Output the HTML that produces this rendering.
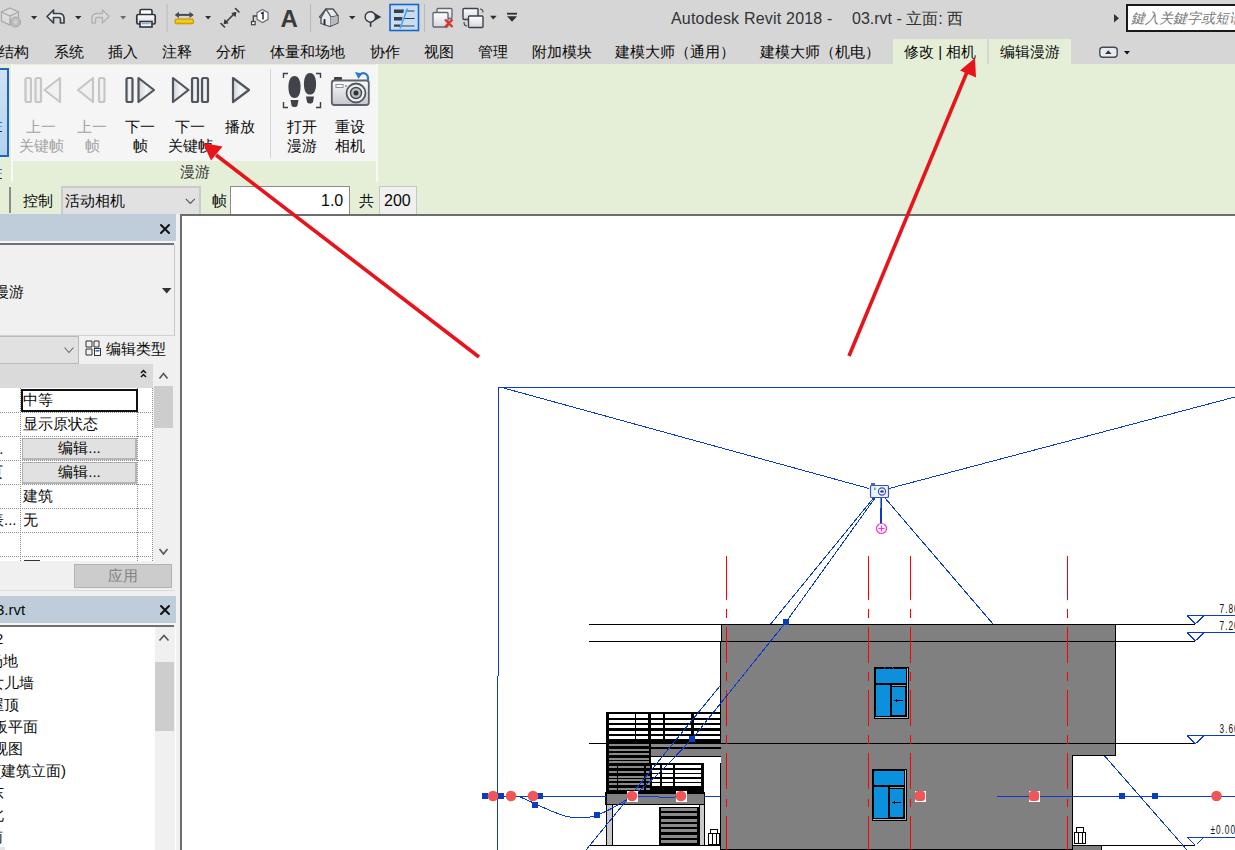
<!DOCTYPE html>
<html><head><meta charset="utf-8">
<style>
*{box-sizing:border-box}
html,body{margin:0;padding:0}
body{width:1235px;height:850px;overflow:hidden;position:relative;background:#d6d6d6;font-family:"Liberation Sans",sans-serif;color:#0a0a0a}
.a{position:absolute}
.t{position:absolute;white-space:nowrap;font-size:15px;line-height:18px}
svg{position:absolute;overflow:visible}
</style></head><body>

<!-- ===== title bar ===== -->
<svg width="1235" height="64" style="left:0;top:0" viewBox="0 0 1235 64">
 <defs>
  <linearGradient id="gw" x1="0" y1="0" x2="0" y2="1"><stop offset="0" stop-color="#ffffff"/><stop offset="1" stop-color="#d5d8dd"/></linearGradient>
 </defs>
 <!-- app icon -->
 <g stroke="#a8a8a8" stroke-width="1.2" fill="#dcdcdc">
  <path d="M10 8 L18.5 12 V21 L10 25 L1.5 21 V12 Z"/>
  <path d="M1.5 12 L10 16 L18.5 12 M10 16 V25" fill="none"/>
 </g>
 <circle cx="15.5" cy="22" r="5" fill="#bdbdbd" stroke="#a5a5a5" stroke-width="1"/>
 <circle cx="15.5" cy="22" r="2" fill="#d0d0d0"/>
 <g fill="#2e2e2e">
  <path d="M31 16 H37.2 L34.1 19.5 Z"/><path d="M75 16 H81.5 L78.2 19.5 Z"/>
  <path d="M205.2 16 H211.1 L208.1 19.5 Z"/><path d="M349 16 H355.5 L352.2 19.5 Z"/>
  <path d="M490 15.8 H496.7 L493.3 19.6 Z"/>
  <path d="M507 16.2 H517 L512 21.8 Z"/><rect x="507" y="12.8" width="10" height="1.8"/>
 </g>
 <path d="M120.2 16 H126.1 L123.1 19.5 Z" fill="#6a6a6a"/>
 <!-- undo -->
 <path d="M47 16.5 L53.5 10 V13.5 H59 C62.5 13.5 64 15.5 64 18.5 V23 H60.5 V19 C60.5 18 60 17.5 59 17.5 H53.5 V23 Z" fill="#e7eaef" stroke="#3c4148" stroke-width="1.7" stroke-linejoin="round"/>
 <!-- redo -->
 <path d="M109 16.5 L102.5 10 V13.5 H97 C93.5 13.5 92 15.5 92 18.5 V23 H95.5 V19 C95.5 18 96 17.5 97 17.5 H102.5 V23 Z" fill="#dadada" stroke="#b2b2b2" stroke-width="1.4" stroke-linejoin="round"/>
 <!-- printer -->
 <rect x="140" y="9.5" width="12" height="7" rx="1.5" fill="#fff" stroke="#2f353d" stroke-width="1.6"/>
 <rect x="136.8" y="14.5" width="18.4" height="9.5" rx="1.5" fill="url(#gw)" stroke="#2f353d" stroke-width="1.7"/>
 <rect x="140" y="21.5" width="12" height="5.5" fill="#eef2f6" stroke="#2f353d" stroke-width="1.6"/>
 <rect x="141.5" y="23" width="9" height="1.2" fill="#8fb0cc"/>
 <!-- separators -->
 <g fill="#b9b9b9"><rect x="166.5" y="4" width="1" height="28"/><rect x="310" y="4" width="1" height="28"/><rect x="424" y="4" width="1" height="28"/></g>
 <!-- measure -->
 <path d="M176 14.9 H192.5" stroke="#444b55" stroke-width="2"/>
 <path d="M174.7 14.9 L179 11.8 V18 Z M193.8 14.9 L189.5 11.8 V18 Z" fill="#444b55"/>
 <rect x="175" y="19" width="18.5" height="4.8" rx="1.5" fill="#f0c000" stroke="#c88a00" stroke-width="1"/>
 <path d="M177 20.5 V21.5 M179 20.5 V21.5 M181 20.5 V21.5 M183 20.5 V21.5 M185 20.5 V21.5 M187 20.5 V21.5 M189 20.5 V21.5 M191 20.5 V21.5" stroke="#fff7b0" stroke-width="0.8"/>
 <!-- aligned dim -->
 <g stroke="#353b43" stroke-linecap="round">
  <path d="M221 23.5 L224.5 27" stroke-width="1.6"/><path d="M235.5 8.5 L239 12" stroke-width="1.6"/>
  <path d="M225 23 L235 13" stroke-width="1.5"/>
 </g>
 <path d="M223.6 24.2 L224.5 19 L228.8 23.3 Z M236.4 12 L235.5 17.2 L231.2 12.9 Z" fill="#353b43"/>
 <!-- tag -->
 <path d="M262.5 9.5 L268 12.7 V19.3 L262.5 22.5 L257 19.3 V12.7 Z" fill="#fff" stroke="#6a6f77" stroke-width="1.2"/>
 <path d="M257 16 H253.3 V21.5" fill="none" stroke="#3c424a" stroke-width="1.3"/>
 <rect x="251.5" y="21.5" width="3.6" height="3.2" fill="#fff" stroke="#3c424a" stroke-width="1.2"/>
 <path d="M261 13.5 L263 12.5 V19.5" fill="none" stroke="#2a2e34" stroke-width="1.5"/>
 <text x="280.6" y="26.7" font-family="Liberation Sans" font-weight="bold" font-size="24" fill="#3a3a3a">A</text>
 <!-- house -->
 <path d="M319.5 17 L326 9 H333 L338 15.5 V23 L330 26.5 L321 23.5 V18 Z" fill="#e8eaee" stroke="#4a4f57" stroke-width="1.3" stroke-linejoin="round"/>
 <path d="M321 18 L326 9 L331 17 V26 M331 17 L338 15.5" fill="none" stroke="#4a4f57" stroke-width="1.2"/>
 <path d="M331 17.5 L337.5 16 V22.8 L331 25.5 Z" fill="#b6bcc4"/>
 <path d="M323.5 25 V20 C323.5 18.5 325.5 18.5 325.5 20 V25.5 Z" fill="#2d3137"/>
 <!-- pin -->
 <path d="M371 11 L381.3 16.9 L371 22.8 Z" fill="#30353c"/>
 <rect x="369.8" y="21" width="1.6" height="5.8" fill="#30353c"/>
 <circle cx="370.3" cy="16.9" r="5.2" fill="#e4e7ec" stroke="#353a41" stroke-width="1.4"/>
 <!-- thin lines button -->
 <rect x="390" y="4.5" width="28.5" height="26" fill="#c6ddf3" stroke="#1766c9" stroke-width="1.6"/>
 <g fill="#3a3f46"><path d="M394 9.5 H404 L403.3 13 H394 Z"/><path d="M394 17 H402.5 L401.8 20.5 H394 Z"/><path d="M394 24.5 H400.5 L400 26.8 H394 Z"/></g>
 <g stroke="#3a3f46" stroke-width="1.2"><path d="M405.5 11 H414.5 M403 18.5 H414.5 M400.5 26 H414.5"/></g>
 <path d="M407.5 8.5 L400 28.5" stroke="#3aa0ff" stroke-width="1.4"/>
 <!-- close hidden -->
 <rect x="437" y="8.5" width="15" height="10" rx="1" fill="url(#gw)" stroke="#606670" stroke-width="1.3"/>
 <rect x="433" y="12.5" width="15" height="14.5" rx="1" fill="url(#gw)" stroke="#606670" stroke-width="1.3"/>
 <path d="M445 19.5 L452.5 27 M452.5 19.5 L445 27" stroke="#e03030" stroke-width="2.4"/>
 <!-- switch windows -->
 <rect x="463" y="8.5" width="15" height="11" rx="1" fill="url(#gw)" stroke="#3c424a" stroke-width="1.4"/>
 <rect x="468.5" y="16" width="14.5" height="11.5" rx="1" fill="url(#gw)" stroke="#3c424a" stroke-width="1.4"/>
 <path d="M480 9 C482 9 483 10 483 12.5 M464 22 C464 25 465 26 467 26" fill="none" stroke="#3c424a" stroke-width="1.1"/>
 <!-- ribbon toggle -->
 <rect x="1099.8" y="47.3" width="17.4" height="10" rx="3" fill="#e8ebf0" stroke="#454b55" stroke-width="1.4"/>
 <path d="M1105 54 L1108.3 50.2 L1111.6 54 Z" fill="#30353c"/>
 <path d="M1124 51 H1130 L1127 54.6 Z" fill="#111"/>
 <path d="M1114 14 L1119 18.3 L1114 22.6 Z" fill="#333"/>
</svg>
<div class="t" style="left:671px;top:10px;font-size:16px;color:#333;letter-spacing:0.2px">Autodesk Revit 2018 -</div>
<div class="t" style="left:852px;top:10px;font-size:16px;color:#333">03.rvt - 立面: 西</div>
<div class="a" style="left:1126px;top:4px;width:120px;height:28px;background:#fff;border:2px solid #1a1a1a"></div>
<div class="t" style="left:1131px;top:9px;font-size:14px;color:#7a7a7a;font-style:italic">鍵入关鍵字或短语</div>

<!-- ===== tabs ===== -->
<div class="a" style="left:893px;top:39px;width:94px;height:26px;background:#e5efd8"></div>
<div class="a" style="left:989px;top:39px;width:82px;height:26px;background:#e5efd8"></div>
<div id="tabs">
<div class="t" style="left:-1px;top:43px">结构</div>
<div class="t" style="left:54px;top:43px">系统</div>
<div class="t" style="left:108px;top:43px">插入</div>
<div class="t" style="left:162px;top:43px">注释</div>
<div class="t" style="left:216px;top:43px">分析</div>
<div class="t" style="left:270px;top:43px">体量和场地</div>
<div class="t" style="left:370px;top:43px">协作</div>
<div class="t" style="left:424px;top:43px">视图</div>
<div class="t" style="left:478px;top:43px">管理</div>
<div class="t" style="left:532px;top:43px">附加模块</div>
<div class="t" style="left:615px;top:43px">建模大师（通用）</div>
<div class="t" style="left:760px;top:43px">建模大师（机电）</div>
<div class="t" style="left:904px;top:43px">修改 | 相机</div>
<div class="t" style="left:1000px;top:43px">编辑漫游</div>
</div>

<!-- ===== ribbon ===== -->
<div class="a" style="left:0;top:64px;width:1235px;height:150px;background:#e5efd8"></div>
<div class="a" style="left:13px;top:65px;width:363px;height:96px;background:#f5f5f5"></div>
<div class="a" style="left:11px;top:64px;width:2px;height:118px;background:#f7faf3"></div>
<div class="a" style="left:376px;top:64px;width:2px;height:118px;background:#f7faf3"></div>
<div class="a" style="left:-2px;top:68px;width:11px;height:89px;background:linear-gradient(#cfe3f7,#b3d2ef);border:2px solid #1e64c8"></div>
<div class="a" style="left:0;top:121.5px;width:1.5px;height:1px;background:#2a6bd8"></div><div class="a" style="left:0;top:125.5px;width:1.5px;height:1px;background:#5aa0e8"></div><div class="a" style="left:0;top:130.5px;width:1.5px;height:1px;background:#1a2a60"></div>
<div class="a" style="left:0;top:169px;width:1.5px;height:1px;background:#2a6bd8"></div><div class="a" style="left:0;top:173px;width:1.5px;height:1px;background:#5ab0d8"></div><div class="a" style="left:0;top:178px;width:1.5px;height:1px;background:#1a2a60"></div>
<div class="a" style="left:270px;top:69px;width:1px;height:89px;background:#d4d4d4"></div>
<div class="t" style="left:180px;top:163px;color:#333">漫游</div>
<!-- ribbon labels -->
<div class="t" style="left:21px;top:118px;width:40px;text-align:center;color:#a3a3a3">上一</div>
<div class="t" style="left:11px;top:137px;width:60px;text-align:center;color:#a3a3a3">关键帧</div>
<div class="t" style="left:72px;top:118px;width:40px;text-align:center;color:#a3a3a3">上一</div>
<div class="t" style="left:72px;top:137px;width:40px;text-align:center;color:#a3a3a3">帧</div>
<div class="t" style="left:120px;top:118px;width:40px;text-align:center">下一</div>
<div class="t" style="left:120px;top:137px;width:40px;text-align:center">帧</div>
<div class="t" style="left:170px;top:118px;width:40px;text-align:center">下一</div>
<div class="t" style="left:160px;top:137px;width:60px;text-align:center">关键帧</div>
<div class="t" style="left:220px;top:118px;width:40px;text-align:center">播放</div>
<div class="t" style="left:282px;top:118px;width:40px;text-align:center">打开</div>
<div class="t" style="left:282px;top:137px;width:40px;text-align:center">漫游</div>
<div class="t" style="left:330px;top:118px;width:40px;text-align:center">重设</div>
<div class="t" style="left:330px;top:137px;width:40px;text-align:center">相机</div>
<!-- ribbon icons -->
<svg width="1235" height="120" style="left:0;top:0" viewBox="0 0 1235 120">
<defs>
<linearGradient id="gm" x1="0" y1="0" x2="1" y2="0"><stop offset="0" stop-color="#cfd3da"/><stop offset="0.5" stop-color="#f4f5f7"/><stop offset="1" stop-color="#dcdfe4"/></linearGradient>
</defs>
<g fill="#f1f1f1" stroke="#c6c6c6" stroke-width="2.2" stroke-linejoin="round">
<rect x="25.5" y="78" width="5.5" height="24" rx="1.5"/>
<rect x="35.5" y="78" width="5.5" height="24" rx="1.5"/>
<path d="M60 78 L44.5 90 L60 102 Z"/>
<path d="M93 78 L78 90 L93 102 Z"/>
<rect x="99" y="78" width="5.5" height="24" rx="1.5"/>
</g>
<g fill="url(#gm)" stroke="#51565e" stroke-width="2.2" stroke-linejoin="round">
<rect x="126.5" y="78" width="6" height="24" rx="1.5"/>
<path d="M138.5 78 L154 90 L138.5 102 Z"/>
<path d="M173 78 L188.5 90 L173 102 Z"/>
<rect x="192" y="78" width="6" height="24" rx="1.5"/>
<rect x="202" y="78" width="6" height="24" rx="1.5"/>
<path d="M233 78 L249 90 L233 102 Z"/>
</g>
<!-- footprints -->
<g fill="none" stroke="#3d3f44" stroke-width="1.4">
<path d="M283.5 78 V73.5 H288"/><path d="M316 73.5 H320.5 V78"/><path d="M283.5 102 V107.5 H288"/><path d="M316 107.5 H320.5 V102"/>
</g>
<g fill="#404349">
<path d="M294.5 76 C299 76 301 82 300.5 89 C300 95 298 98 294.5 98 C291 98 289 95 288.5 89 C288 82 290 76 294.5 76 Z"/>
<path d="M290.5 100 H298.5 L297.5 105.5 C296.5 107.5 292.5 107.5 291.5 105.5 Z"/>
<path d="M310 73 C314.5 73 316.5 79 316 86 C315.5 92 313.5 94.5 310 94.5 C306.5 94.5 304.5 92 304 86 C303.5 79 305.5 73 310 73 Z"/>
<path d="M306 96.5 H314 L313 102 C312 104 308 104 307 102 Z"/>
</g>
<!-- camera -->
<defs><linearGradient id="gc" x1="0" y1="0" x2="0" y2="1"><stop offset="0" stop-color="#fbfbfb"/><stop offset="1" stop-color="#c4c7cc"/></linearGradient></defs>
<rect x="334" y="77" width="8" height="4.5" rx="1" fill="#3d3f44"/>
<rect x="331.8" y="80.5" width="37" height="24.5" rx="2.5" fill="url(#gc)" stroke="#5f6369" stroke-width="1.8"/>
<rect x="336" y="84.5" width="7" height="3" fill="#fff" stroke="#8c9096" stroke-width="1"/>
<circle cx="346" cy="86" r="1" fill="#8c9096"/>
<circle cx="356" cy="93" r="9.5" fill="#eceef0" stroke="#54585e" stroke-width="1.8"/>
<circle cx="356" cy="93" r="5.5" fill="#b9bdc2" stroke="#44484e" stroke-width="1.4"/>
<circle cx="356" cy="93" r="2.5" fill="#2f3238"/>
<path d="M359 76 C362 71 369 72.5 368 81" fill="none" stroke="#2d78d2" stroke-width="2.2"/>
<path d="M355 72 L362 73.5 L358.5 79 Z" fill="#2d78d2"/>
</svg>

<!-- ===== options bar ===== -->
<div class="a" style="left:9px;top:187px;width:2px;height:26px;background:#8a8a8a"></div>
<div class="t" style="left:23px;top:192px">控制</div>
<div class="a" style="left:61px;top:186px;width:140px;height:28px;background:#e1e1e1;border:2px solid #cacaca;border-bottom:none"></div>
<div class="t" style="left:65px;top:192px">活动相机</div>
<svg width="20" height="20" style="left:180px;top:190px" viewBox="180 190 20 20"><path d="M185.8 198.8 L190.3 203.5 L194.8 198.8" fill="none" stroke="#555" stroke-width="1.1"/></svg>
<div class="t" style="left:212px;top:192px">帧</div>
<div class="a" style="left:230px;top:186px;width:120px;height:28px;background:#fff;border:1px solid #8c8c8c;border-bottom:none"></div>
<div class="t" style="left:321px;top:192px;font-size:16px">1.0</div>
<div class="t" style="left:359px;top:192px">共</div>
<div class="a" style="left:379px;top:186px;width:38px;height:28px;background:#f0f0f0;border:1px solid #c6c6c6;border-bottom:none"></div>
<div class="t" style="left:384px;top:192px;font-size:16px">200</div>

<!-- ===== left panel ===== -->
<div class="a" style="left:0;top:214px;width:180px;height:636px;background:#f0f0f0;overflow:hidden">
 <div class="a" style="left:0;top:0;width:176px;height:27px;background:#bfcddb"></div>
 <div class="a" style="left:0;top:27px;width:176px;height:2px;background:#f5f5f5"></div>
 <div class="a" style="left:0;top:29px;width:174px;height:2px;background:#707070"></div>
 <div class="a" style="left:0;top:31px;width:175px;height:91px;background:#f0f0f0;border-right:1px solid #c9c9c9;border-bottom:1px solid #d2d2d2"></div>
 <div class="t" style="left:-6px;top:69px">漫游</div>
 <div class="a" style="left:0;top:122px;width:79px;height:28px;background:#e1e1e1;border:1px solid #b9b9b9;border-left:none"></div>
 <div class="t" style="left:106px;top:126px">编辑类型</div>
 <div class="a" style="left:0;top:150px;width:153px;height:24px;background:#dadada"></div>
 <div class="a" style="left:154px;top:150px;width:19px;height:197px;background:#f0f0f0"></div>
 <div class="a" style="left:154px;top:172px;width:19px;height:42px;background:#cdcdcd"></div>
 <div class="a" style="left:0;top:174px;width:153px;height:173px;background:#fff;overflow:hidden">
  <div class="a" style="left:20px;top:0;width:0;height:173px;border-left:1px dotted #8a8a8a"></div>
  <div class="a" style="left:137px;top:0;width:0;height:173px;border-left:1px dotted #8a8a8a"></div>
  <div class="a" style="left:152px;top:0;width:0;height:173px;border-left:1px dotted #8a8a8a"></div>
  <div class="a" style="left:0;top:24px;width:153px;height:0;border-top:1px dotted #8a8a8a"></div>
  <div class="a" style="left:0;top:48px;width:153px;height:0;border-top:1px dotted #8a8a8a"></div>
  <div class="a" style="left:0;top:72px;width:153px;height:0;border-top:1px dotted #8a8a8a"></div>
  <div class="a" style="left:0;top:96px;width:153px;height:0;border-top:1px dotted #8a8a8a"></div>
  <div class="a" style="left:0;top:120px;width:153px;height:0;border-top:1px dotted #8a8a8a"></div>
  <div class="a" style="left:0;top:144px;width:153px;height:0;border-top:1px dotted #8a8a8a"></div>
  <div class="a" style="left:0;top:168px;width:153px;height:0;border-top:1px dotted #8a8a8a"></div>
  <div class="a" style="left:21px;top:1px;width:117px;height:23px;background:#fff;border:2px solid #111"></div>
  <div class="t" style="left:23px;top:3px">中等</div>
  <div class="t" style="left:23px;top:27px">显示原状态</div>
  <div class="a" style="left:22px;top:50px;width:115px;height:22px;background:#e1e1e1;border:1px solid #adadad;border-right:2px solid #b5b5b5;border-bottom:2px solid #b5b5b5"></div>
  <div class="t" style="left:22px;top:51px;width:115px;text-align:center">编辑...</div>
  <div class="a" style="left:22px;top:74px;width:115px;height:22px;background:#e1e1e1;border:1px solid #adadad;border-right:2px solid #b5b5b5;border-bottom:2px solid #b5b5b5"></div>
  <div class="t" style="left:22px;top:75px;width:115px;text-align:center">编辑...</div>
  <div class="t" style="left:23px;top:99px">建筑</div>
  <div class="t" style="left:23px;top:123px">无</div>
  <div class="t" style="left:-9px;top:52px">...</div>
  <div class="t" style="left:-12px;top:75px">页</div>
  <div class="t" style="left:-11px;top:123px">表...</div>
  <div class="a" style="left:24px;top:172px;width:16px;height:12px;border:1px solid #333;background:#fff"></div>
 </div>
 <div class="a" style="left:74px;top:350px;width:98px;height:24px;background:#cccccc;border:1px solid #b3b3b3"></div>
 <div class="t" style="left:74px;top:353px;width:98px;text-align:center;color:#838383">应用</div>
 <div class="a" style="left:0;top:376px;width:175px;height:1px;background:#dcdcdc"></div>
 <!-- browser -->
 <div class="a" style="left:0;top:382px;width:176px;height:27px;background:#bfcddb"></div>
 <div class="t" style="left:-4px;top:387px">3.rvt</div>
 <div class="a" style="left:0;top:409px;width:176px;height:2px;background:#f5f5f5"></div>
 <div class="a" style="left:0;top:411px;width:174px;height:2px;background:#707070"></div>
 <div class="a" style="left:0;top:413px;width:155px;height:223px;background:#fff"></div>
 <div class="a" style="left:155px;top:413px;width:19px;height:223px;background:#f0f0f0"></div>
 <div class="a" style="left:155px;top:448px;width:19px;height:69px;background:#cdcdcd"></div>
 <div class="t" style="left:-5px;top:416px">2</div>
 <div class="t" style="left:-12px;top:438px">场地</div>
 <div class="t" style="left:-11.5px;top:460px">女儿墙</div>
 <div class="t" style="left:-11px;top:481.5px">屋顶</div>
 <div class="t" style="left:-37px;top:503.5px">天花板平面</div>
 <div class="t" style="left:-37px;top:526px">三维视图</div>
 <div class="t" style="left:-4px;top:548px">(建筑立面)</div>
 <div class="t" style="left:-11px;top:570px">东</div>
 <div class="t" style="left:-11px;top:592px">北</div>
 <div class="t" style="left:-12px;top:614px">南</div>
 <div class="a" style="left:0;top:633px;width:5px;height:3px;background:#e6e6e6"></div>
 <div class="a" style="left:175px;top:413px;width:1px;height:223px;background:#fff"></div>
</div>
<svg width="180" height="636" style="left:0;top:214px" viewBox="0 214 180 636">
 <g stroke="#111" stroke-width="2" stroke-linecap="round"><path d="M161 225 L169 233 M169 225 L161 233"/><path d="M161 606 L169 614 M169 606 L161 614"/></g>
 <path d="M162 288 H171.5 L166.7 293.5 Z" fill="#333"/>
 <path d="M64.5 347.5 L69 352.5 L73.5 347.5" fill="none" stroke="#666" stroke-width="1.1"/>
 <g fill="none" stroke="#333" stroke-width="1">
  <path d="M86 341 h6 v6 h-6 z M86 349 h6 v6 h-6 z M94 341 h5 v6 h-5 z"/>
 </g>
 <rect x="94.5" y="348.5" width="6" height="7" fill="#fff" stroke="#333"/>
 <rect x="95.5" y="350" width="4" height="1.6" fill="#2a6fd0"/>
 <path d="M141 373 L143.5 370.5 L146 373 M141 377 L143.5 374.5 L146 377" fill="none" stroke="#111" stroke-width="1.5"/>
 <path d="M159.5 378.5 L163.5 373.5 L167.5 378.5" fill="none" stroke="#555" stroke-width="1.6"/>
 <path d="M159.5 549 L163.5 554 L167.5 549" fill="none" stroke="#555" stroke-width="1.6"/>
 <path d="M159.5 640.5 L164 635.5 L168.5 640.5" fill="none" stroke="#555" stroke-width="1.6"/>
</svg>

<!-- ===== drawing area ===== -->
<div class="a" style="left:180px;top:214px;width:1055px;height:636px;background:#fff;border-top:2px solid #6d6d6d;border-left:2px solid #6d6d6d"></div>
<svg width="1235" height="850" style="left:0;top:0" viewBox="0 0 1235 850">
<defs><clipPath id="dc"><rect x="182" y="216" width="1053" height="634"/></clipPath></defs>
<g clip-path="url(#dc)" shape-rendering="crispEdges">
 <!-- lines under building -->
 <g stroke="#0a3ccc" stroke-width="1" fill="none" shape-rendering="crispEdges">
  <path d="M873.5 498 L770.7 624"/>
  <path d="M885 498 L993 624"/>
 </g>
 <!-- horizontal level lines -->
 <g stroke="#000" stroke-width="1.2">
  <path d="M589 624.5 H1195"/><path d="M589 641.5 H1195"/><path d="M589 743.5 H1195"/><path d="M589 845.5 H1195"/>
 </g>
 <!-- building -->
 <path d="M720.5 641.5 V850 H1072.5 V755.5 H1115.5 V624.5 H721.5 V641.5 Z" fill="#808080" stroke="#000" stroke-width="1.5"/>
 <path d="M720.5 641.5 H1115.5 M720.5 743.5 H1115.5" stroke="#000" stroke-width="1.2"/>
 <rect x="1072.5" y="845.5" width="29" height="6" fill="#808080" stroke="#000" stroke-width="1.2"/>
 <!-- windows -->
 <g id="win">
  <rect x="874" y="667" width="34.5" height="52" fill="#000"/>
  <rect x="876" y="669" width="30" height="14" fill="#0a90dc"/>
  <rect x="876" y="685" width="14.2" height="31" fill="#0a90dc"/>
  <rect x="892" y="686.8" width="13.2" height="28.2" fill="#0a90dc"/>
  <rect x="892" y="684.6" width="14" height="1.2" fill="#9a9a9a"/>
  <rect x="906.8" y="668" width="1" height="50" fill="#b5b5b5"/>
  <rect x="875" y="717" width="32.5" height="1" fill="#b5b5b5"/>
  <path d="M896 700.5 H903" stroke="#000" stroke-width="1"/>
  <path d="M894 700.5 L897 698.5 V702.5 Z" fill="#000"/>
 </g>
 <use href="#win" transform="translate(-2 102)"/>
 <circle cx="888.8" cy="671.8" r="5.8" fill="none" stroke="#4a78d0" stroke-width="0.9" opacity="0.8" shape-rendering="auto"/>
 <!-- balcony -->
 <rect x="606" y="712" width="114.5" height="51" fill="#000"/>
 <g fill="#fff"><rect x="609" y="714.3" width="25.7" height="3.2"/><rect x="636" y="714.3" width="12.0" height="3.2"/><rect x="651" y="714.3" width="12.0" height="3.2"/><rect x="664.7" y="714.3" width="26.5" height="3.2"/><rect x="694.1" y="714.3" width="25.9" height="3.2"/><rect x="609" y="719.8" width="25.7" height="3.2"/><rect x="636" y="719.8" width="12.0" height="3.2"/><rect x="651" y="719.8" width="12.0" height="3.2"/><rect x="664.7" y="719.8" width="26.5" height="3.2"/><rect x="694.1" y="719.8" width="25.9" height="3.2"/><rect x="609" y="725.2" width="25.7" height="3.2"/><rect x="636" y="725.2" width="12.0" height="3.2"/><rect x="651" y="725.2" width="12.0" height="3.2"/><rect x="664.7" y="725.2" width="26.5" height="3.2"/><rect x="694.1" y="725.2" width="25.9" height="3.2"/><rect x="609" y="730.6" width="25.7" height="3.2"/><rect x="636" y="730.6" width="12.0" height="3.2"/><rect x="651" y="730.6" width="12.0" height="3.2"/><rect x="664.7" y="730.6" width="26.5" height="3.2"/><rect x="694.1" y="730.6" width="25.9" height="3.2"/><rect x="609" y="736.1" width="25.7" height="3.2"/><rect x="636" y="736.1" width="12.0" height="3.2"/><rect x="651" y="736.1" width="12.0" height="3.2"/><rect x="664.7" y="736.1" width="26.5" height="3.2"/><rect x="694.1" y="736.1" width="25.9" height="3.2"/></g>
 <g fill="#8a8a8a"><rect x="608.5" y="744.3" width="40" height="2"/><rect x="608.5" y="748.8" width="40" height="2"/><rect x="608.5" y="753.2" width="40" height="2"/><rect x="608.5" y="757.8" width="40" height="2"/><rect x="608.5" y="761.3" width="40" height="2"/></g>
 <rect x="651" y="744" width="69.5" height="3" fill="#8a8a8a"/>
 <rect x="651" y="748.5" width="69.5" height="7.5" fill="#808080"/>
 <rect x="651" y="757" width="69.5" height="6" fill="#fff"/>
 <rect x="606" y="762.5" width="97.5" height="31" fill="#000"/>
 <g fill="#8a8a8a"><rect x="608.5" y="765.6" width="8.0" height="2"/><rect x="617.8" y="765.6" width="26.2" height="2"/><rect x="646" y="765.6" width="4.0" height="2"/><rect x="608.5" y="770.8" width="8.0" height="2"/><rect x="617.8" y="770.8" width="26.2" height="2"/><rect x="646" y="770.8" width="4.0" height="2"/><rect x="608.5" y="775.6" width="8.0" height="2"/><rect x="617.8" y="775.6" width="26.2" height="2"/><rect x="646" y="775.6" width="4.0" height="2"/><rect x="608.5" y="778.6" width="8.0" height="2"/><rect x="617.8" y="778.6" width="26.2" height="2"/><rect x="646" y="778.6" width="4.0" height="2"/><rect x="608.5" y="783" width="8.0" height="2"/><rect x="617.8" y="783" width="26.2" height="2"/><rect x="646" y="783" width="4.0" height="2"/><rect x="608.5" y="787.8" width="8.0" height="2"/><rect x="617.8" y="787.8" width="26.2" height="2"/><rect x="646" y="787.8" width="4.0" height="2"/></g>
 <g fill="#fff"><rect x="651.5" y="765.2" width="8.5" height="3"/><rect x="661.8" y="765.2" width="11.2" height="3"/><rect x="674.7" y="765.2" width="26.3" height="3"/><rect x="651.5" y="769.7" width="8.5" height="3"/><rect x="661.8" y="769.7" width="11.2" height="3"/><rect x="674.7" y="769.7" width="26.3" height="3"/><rect x="651.5" y="774.1" width="8.5" height="3"/><rect x="661.8" y="774.1" width="11.2" height="3"/><rect x="674.7" y="774.1" width="26.3" height="3"/><rect x="651.5" y="778.6" width="8.5" height="3"/><rect x="661.8" y="778.6" width="11.2" height="3"/><rect x="674.7" y="778.6" width="26.3" height="3"/><rect x="651.5" y="783.0" width="8.5" height="3"/><rect x="661.8" y="783.0" width="11.2" height="3"/><rect x="674.7" y="783.0" width="26.3" height="3"/></g>
 <rect x="606" y="793" width="98.5" height="11.5" fill="#808080" stroke="#000" stroke-width="1.2"/>
 <rect x="606.5" y="804.5" width="5.5" height="41" fill="#c9c9c9" stroke="#000" stroke-width="1"/>
 <rect x="699" y="804.5" width="5.5" height="41" fill="#c9c9c9" stroke="#000" stroke-width="1"/>
 <rect x="659" y="806.5" width="40" height="39" fill="#000"/>
 <g fill="#8a8a8a"><rect x="661" y="808.0" width="36" height="3"/><rect x="661" y="813.3" width="36" height="3"/><rect x="661" y="818.6" width="36" height="3"/><rect x="661" y="823.9" width="36" height="3"/><rect x="661" y="829.2" width="36" height="3"/><rect x="661" y="834.5" width="36" height="3"/><rect x="661" y="839.8" width="36" height="3"/></g>
 <g fill="none" stroke="#000" stroke-width="1"><rect x="710.5" y="829.5" width="7" height="4"/><rect x="708.5" y="833.5" width="11" height="11"/><path d="M712 834 V844 M716 834 V844"/></g>
 <g fill="none" stroke="#000" stroke-width="1"><rect x="1076.5" y="827.5" width="7" height="4.5"/><rect x="1074.5" y="832.5" width="11" height="11"/><path d="M1078 833 V843 M1082 833 V843"/></g>
 <!-- red dashed grids -->
 <g stroke="#f00" stroke-width="1.3" fill="none">
  <path d="M726.5 556 V600 M726.5 609 V617.6"/><path d="M726.5 626.8 V850" stroke-dasharray="36.2 9.2 8.6 9.2"/>
  <path d="M868.5 556 V600 M868.5 609 V617.6"/><path d="M868.5 626.8 V850" stroke-dasharray="36.2 9.2 8.6 9.2"/>
  <path d="M910.5 556 V600 M910.5 609 V617.6"/><path d="M910.5 626.8 V850" stroke-dasharray="36.2 9.2 8.6 9.2"/>
  <path d="M1067.5 556 V600 M1067.5 609 V617.6"/><path d="M1067.5 626.8 V850" stroke-dasharray="36.2 9.2 8.6 9.2"/>
 </g>
 <!-- crop region & camera lines -->
 <g stroke="#0a3ccc" stroke-width="1" fill="none" shape-rendering="crispEdges">
  <path d="M498.5 387 H1235 M498.5 387 V676 M497.5 676 V850"/>
  <path d="M500 387 L869 488.5"/>
  <path d="M889 488.5 L1235 397"/>
  <path d="M875 498 L786 622 L692 739 C668 764 652 782 632 796"/>
  <path d="M720 686 L586 850"/>
  <path d="M1104.7 756 L1187 850"/>
  <path d="M482 796.5 H606 M704 796.5 H720 M997 796.5 H1235" stroke-width="1.2" shape-rendering="crispEdges"/>
  <path d="M517 796 C530 800 545 810 565 816 C580 820 590 818 600 814 C610 810 620 804 632 796"/>
  <path d="M636 796 C650 796 660 797 670 798 L680 796"/>
 </g>
 <!-- level heads -->
 <g stroke="#0a3ccc" stroke-width="1" fill="none" shape-rendering="crispEdges">
  <path d="M1187 615.5 H1235 M1187 615.5 L1195.5 624 M1196.5 623 L1204 615.5"/>
  <path d="M1187 632.5 H1235 M1187 632.5 L1195.5 641 M1196.5 640 L1204 632.5"/>
  <path d="M1187 735.5 H1235 M1187 735.5 L1195.5 744 M1196.5 743 L1204 735.5"/>
  <path d="M1187 837 H1235 M1187 837 L1195.5 845.5 M1196.5 844.5 L1204 837"/>
 </g>
 <g font-family="Liberation Sans" font-size="12.2" fill="#111" letter-spacing="1.4" shape-rendering="auto">
  <text transform="translate(1219.6 612.8) scale(0.68 1)">7.80</text>
  <text transform="translate(1219.6 630.2) scale(0.68 1)">7.20</text>
  <text transform="translate(1219.6 733) scale(0.68 1)">3.60</text>
  <text transform="translate(1210.5 834.2) scale(0.68 1)">±0.00</text>
 </g>
 <!-- handles -->
 <g fill="#0a3cc0">
  <rect x="482" y="793" width="6" height="6"/><rect x="498" y="793" width="6" height="6"/><rect x="537" y="793" width="6" height="6"/>
  <rect x="532" y="802" width="6" height="6"/><rect x="594" y="812" width="6" height="6"/>
  <rect x="689" y="736" width="6" height="6"/><rect x="783" y="619" width="6" height="6"/>
  <rect x="1119" y="793" width="6" height="6"/><rect x="1152" y="793" width="6" height="6"/>
 </g>
 <g fill="#fff">
  <rect x="626.5" y="790.5" width="11" height="11"/><rect x="675.5" y="790.5" width="11" height="11"/>
  <rect x="914.5" y="790.5" width="11" height="11"/><rect x="1028.5" y="790.5" width="11" height="11"/>
 </g>
 <g fill="#f25555" shape-rendering="auto">
  <circle cx="493" cy="796" r="5.3"/><circle cx="511" cy="796" r="5.3"/><circle cx="533" cy="796" r="5.3"/>
  <circle cx="632" cy="796" r="5.3"/><circle cx="681" cy="796" r="5.3"/>
  <rect x="915" y="791" width="10" height="10" rx="3"/><rect x="1029" y="791" width="10" height="10" rx="3"/>
  <circle cx="1216.5" cy="796" r="5.3"/>
 </g>
 <!-- camera -->
 <g shape-rendering="auto">
  <path d="M881 497 V524" stroke="#0a3cc0" stroke-width="2"/>
  <path d="M880 498 V508" stroke="#fff" stroke-width="0.8"/>
  <rect x="871" y="483" width="4" height="2.5" fill="#3a6bd8"/>
  <rect x="870.5" y="485.5" width="18" height="12" rx="1" fill="#e4f6f6" stroke="#4a4ab8" stroke-width="1.2"/>
  <circle cx="882" cy="491.5" r="3.6" fill="none" stroke="#4a4ab8" stroke-width="1.1"/>
  <ellipse cx="882" cy="491.5" rx="1.8" ry="1.2" fill="#3a3a9a"/>
  <rect x="874" y="487.5" width="1.5" height="2.5" fill="#6a9a8a"/>
  <circle cx="881.5" cy="528.5" r="5" fill="none" stroke="#ff33cc" stroke-width="1.2"/>
  <path d="M881.5 525.5 V531.5 M878.5 528.5 H884.5" stroke="#ff33cc" stroke-width="1.2"/>
 </g>
</g>
</svg>

<!-- ===== red arrows ===== -->
<svg width="1235" height="850" style="left:0;top:0" viewBox="0 0 1235 850">
 <g fill="#e8141c" stroke="none">
  <path d="M479 357 L216 155" stroke="#e8141c" stroke-width="3.6" stroke-linecap="butt"/>
  <path d="M203 143 L222.5 146.5 L211 160.5 Z"/>
  <path d="M849 356 L967 72" stroke="#e8141c" stroke-width="3.6"/>
  <path d="M975 58 L960 70.5 L976 77.5 Z"/>
 </g>
</svg>
</body></html>
